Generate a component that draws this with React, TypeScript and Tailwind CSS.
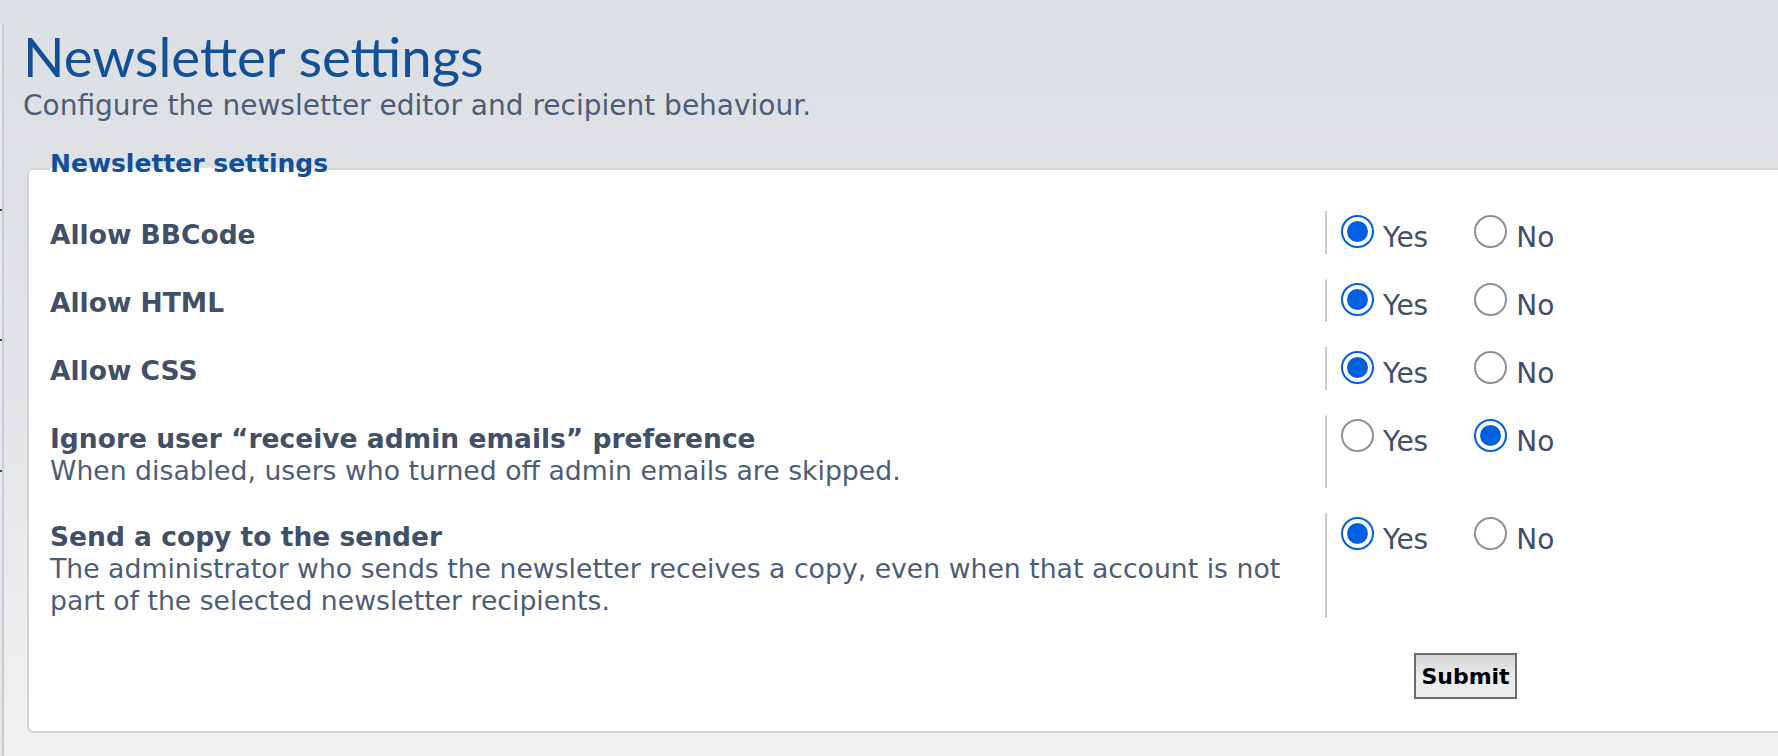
import React, { useState } from 'react';

type Setting = {
  id: string;
  label: string;
  description?: string;
  value: boolean;
};

const initialSettings: Setting[] = [
  { id: 'allow_bbcode', label: 'Allow BBCode', value: true },
  { id: 'allow_html', label: 'Allow HTML', value: true },
  { id: 'allow_css', label: 'Allow CSS', value: true },
  {
    id: 'ignore_admin_emails',
    label: 'Ignore user \u201creceive admin emails\u201d preference',
    description: 'When disabled, users who turned off admin emails are skipped.',
    value: false,
  },
  {
    id: 'copy_to_sender',
    label: 'Send a copy to the sender',
    description:
      'The administrator who sends the newsletter receives a copy, even when that account is not part of the selected newsletter recipients.',
    value: true,
  },
];

const Radio: React.FC<{ checked: boolean; label: string; onChange: () => void }> = ({ checked, label, onChange }) => (
  <label className="flex cursor-pointer items-start" onClick={onChange}>
    {checked ? (
      <span className="mt-[4px] flex h-[33px] w-[33px] items-center justify-center rounded-full border-[2.5px] border-[#0060df] bg-white">
        <span className="h-[21px] w-[21px] rounded-full bg-[#0060df]" />
      </span>
    ) : (
      <span className="mt-[4px] h-[33px] w-[33px] rounded-full border-2 border-[#8f8f9d] bg-white" />
    )}
    <span className="ml-[9px] mt-[11px] text-[28px] leading-[32px] text-[#425067]">{label}</span>
  </label>
);

export default function App() {
  const [settings, setSettings] = useState(initialSettings);

  const setValue = (id: string, value: boolean) => {
    setSettings((prev) => prev.map((s) => (s.id === id ? { ...s, value } : s)));
  };

  return (
    <div
      className="flex h-[756px] w-full overflow-hidden bg-gradient-to-b from-[#dcdfe3] via-[#e2e4e7] to-[#f2f2f2]"
      style={{ fontFamily: '"DejaVu Sans", Verdana, sans-serif' }}
    >
      {/* Sidebar edge */}
      <div className="flex w-[4px] shrink-0 flex-col">
        <div className="mt-[24px] flex flex-1 flex-col border-r-2 border-[#c8ccd1] bg-[#e6e8eb]">
          <span className="mt-[185px] h-[2px] w-[2px] bg-[#105289]" />
          <span className="mt-[128px] h-[2px] w-[2px] bg-[#105289]" />
          <span className="mt-[129px] h-[2px] w-[2px] bg-[#105289]" />
        </div>
      </div>

      {/* Main */}
      <main className="min-w-0 flex-1 pl-[19px]">
        <h1
          className="pt-[24px] text-[54.5px] font-normal leading-[64px] text-[#115098]"
          style={{ fontFamily: 'Lato, "Open Sans", sans-serif' }}
        >
          Newsletter settings
        </h1>
        <p className="text-[28px] leading-[36px] text-[#4c5d77]">
          Configure the newsletter editor and recipient behaviour.
        </p>

        <fieldset className="mt-[25px] ml-[4px] w-[1800px] rounded-md border-2 border-[#d3d3d3] bg-white px-[21px] pb-[32px]">
          <legend className="pb-[10px] text-[25px] font-bold leading-[30px] text-[#115098]">
            Newsletter settings
          </legend>

          <div className="pt-[22px]">
            {settings.map((s) => (
              <div key={s.id} className="mb-[25px] flex">
                <div className="w-[1275px] shrink-0 pt-[8px] pb-[1px] pr-[10px]">
                  <div className="text-[26.5px] font-bold leading-[32px] text-[#425067]">{s.label}</div>
                  {s.description && (
                    <div className="text-[26.7px] leading-[32px] text-[#4c5d77]">{s.description}</div>
                  )}
                </div>
                <div className="flex items-start border-l-2 border-[#cccccc] pl-[14px]">
                  <Radio checked={s.value} label="Yes" onChange={() => setValue(s.id, true)} />
                  <div className="ml-[46px]">
                    <Radio checked={!s.value} label="No" onChange={() => setValue(s.id, false)} />
                  </div>
                </div>
              </div>
            ))}
          </div>

          <div className="pl-[1364px] pt-[10px]">
            <button
              type="button"
              className="h-[46px] w-[103px] border-2 border-[#6b6b6b] bg-gradient-to-b from-[#d4d4d4] via-[#ebebeb] to-[#ededed] text-[22px] font-bold text-black"
            >
              Submit
            </button>
          </div>
        </fieldset>
      </main>
    </div>
  );
}
